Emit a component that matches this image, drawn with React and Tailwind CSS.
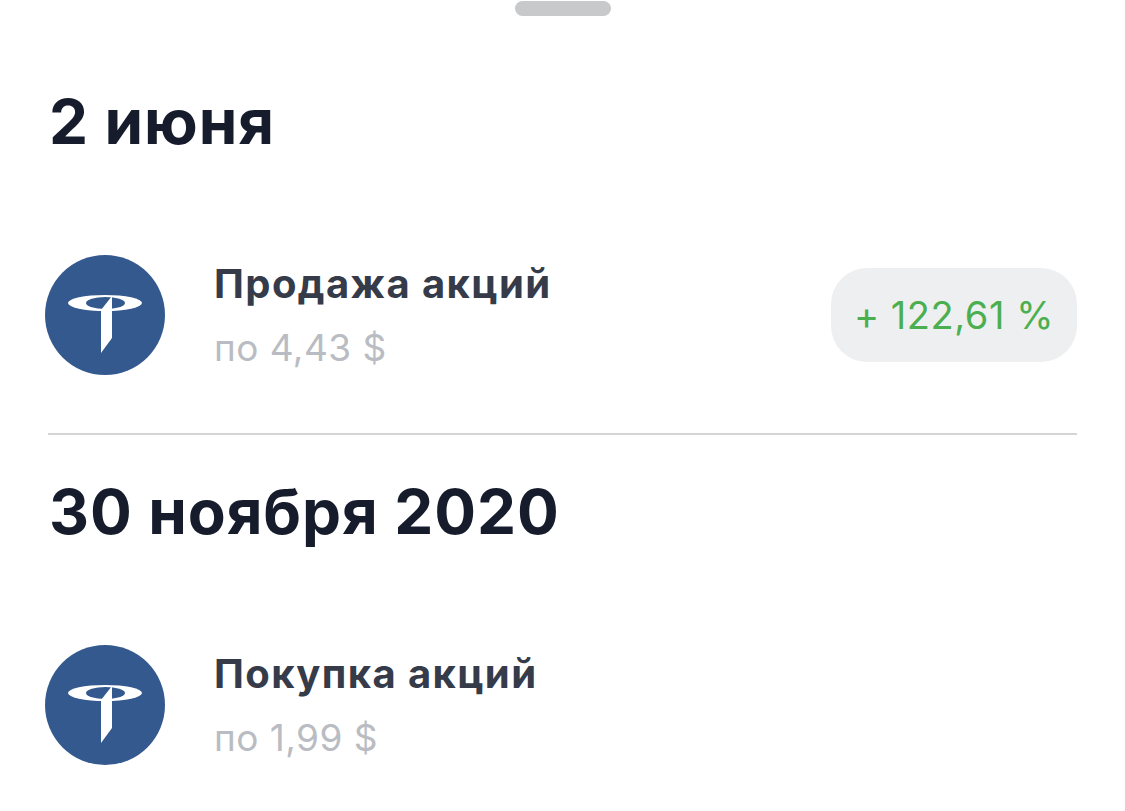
const Logo = () => (
  <svg viewBox="0 0 120 120" className="w-[120px] h-[120px] shrink-0">
    <circle cx="60" cy="60" r="60" fill="#34598e" />
    <ellipse cx="60" cy="48" rx="37" ry="8" fill="#ffffff" />
    <ellipse cx="60.5" cy="48" rx="19.5" ry="6" fill="#34598e" />
    <path d="M67 41 L56 55 L56 98 L67 83 Z" fill="#ffffff" />
  </svg>
);

const Row = ({ title, price, badge }) => (
  <div className="flex items-center justify-between pl-[45px] pr-[48px]">
    <div className="flex items-center gap-[49px]">
      <Logo />
      <div className="flex flex-col">
        <div className="text-[40px] leading-[46px] font-bold tracking-[1.4px] text-[#363b4a]">{title}</div>
        <div className="mt-[19px] text-[37px] leading-[44px] tracking-[0.45px] text-[#b9bcc2]">{price}</div>
      </div>
    </div>
    {badge && (
      <div className="h-[94px] w-[246px] rounded-[36px] bg-[#eeeff1] flex items-center justify-center text-[38px] tracking-[0.55px] text-[#4caf4f]">
        {badge}
      </div>
    )}
  </div>
);

const App = () => {
  return (
    <div className="w-[1125px] h-[811px] overflow-hidden bg-white font-['Inter',sans-serif]">
      {/* Drag handle */}
      <div className="flex justify-center pt-px">
        <div className="w-[96px] h-[15px] rounded-full bg-[#c8c9cb]" />
      </div>

      <h2 className="mt-[72px] pl-[49px] text-[62px] leading-[68px] font-bold tracking-[0.9px] text-[#161c2b]">2 июня</h2>
      <div className="mt-[99px]">
        <Row title="Продажа акций" price="по 4,43 $" badge="+ 122,61 %" />
      </div>

      <div className="mt-[58px] ml-[48px] mr-[48px] h-[2px] bg-[#d4d5d7]" />

      <h2 className="mt-[43px] pl-[49px] text-[62px] leading-[68px] font-bold tracking-[0.9px] text-[#161c2b]">30 ноября 2020</h2>
      <div className="mt-[99px]">
        <Row title="Покупка акций" price="по 1,99 $" />
      </div>
    </div>
  );
};

export default App;
